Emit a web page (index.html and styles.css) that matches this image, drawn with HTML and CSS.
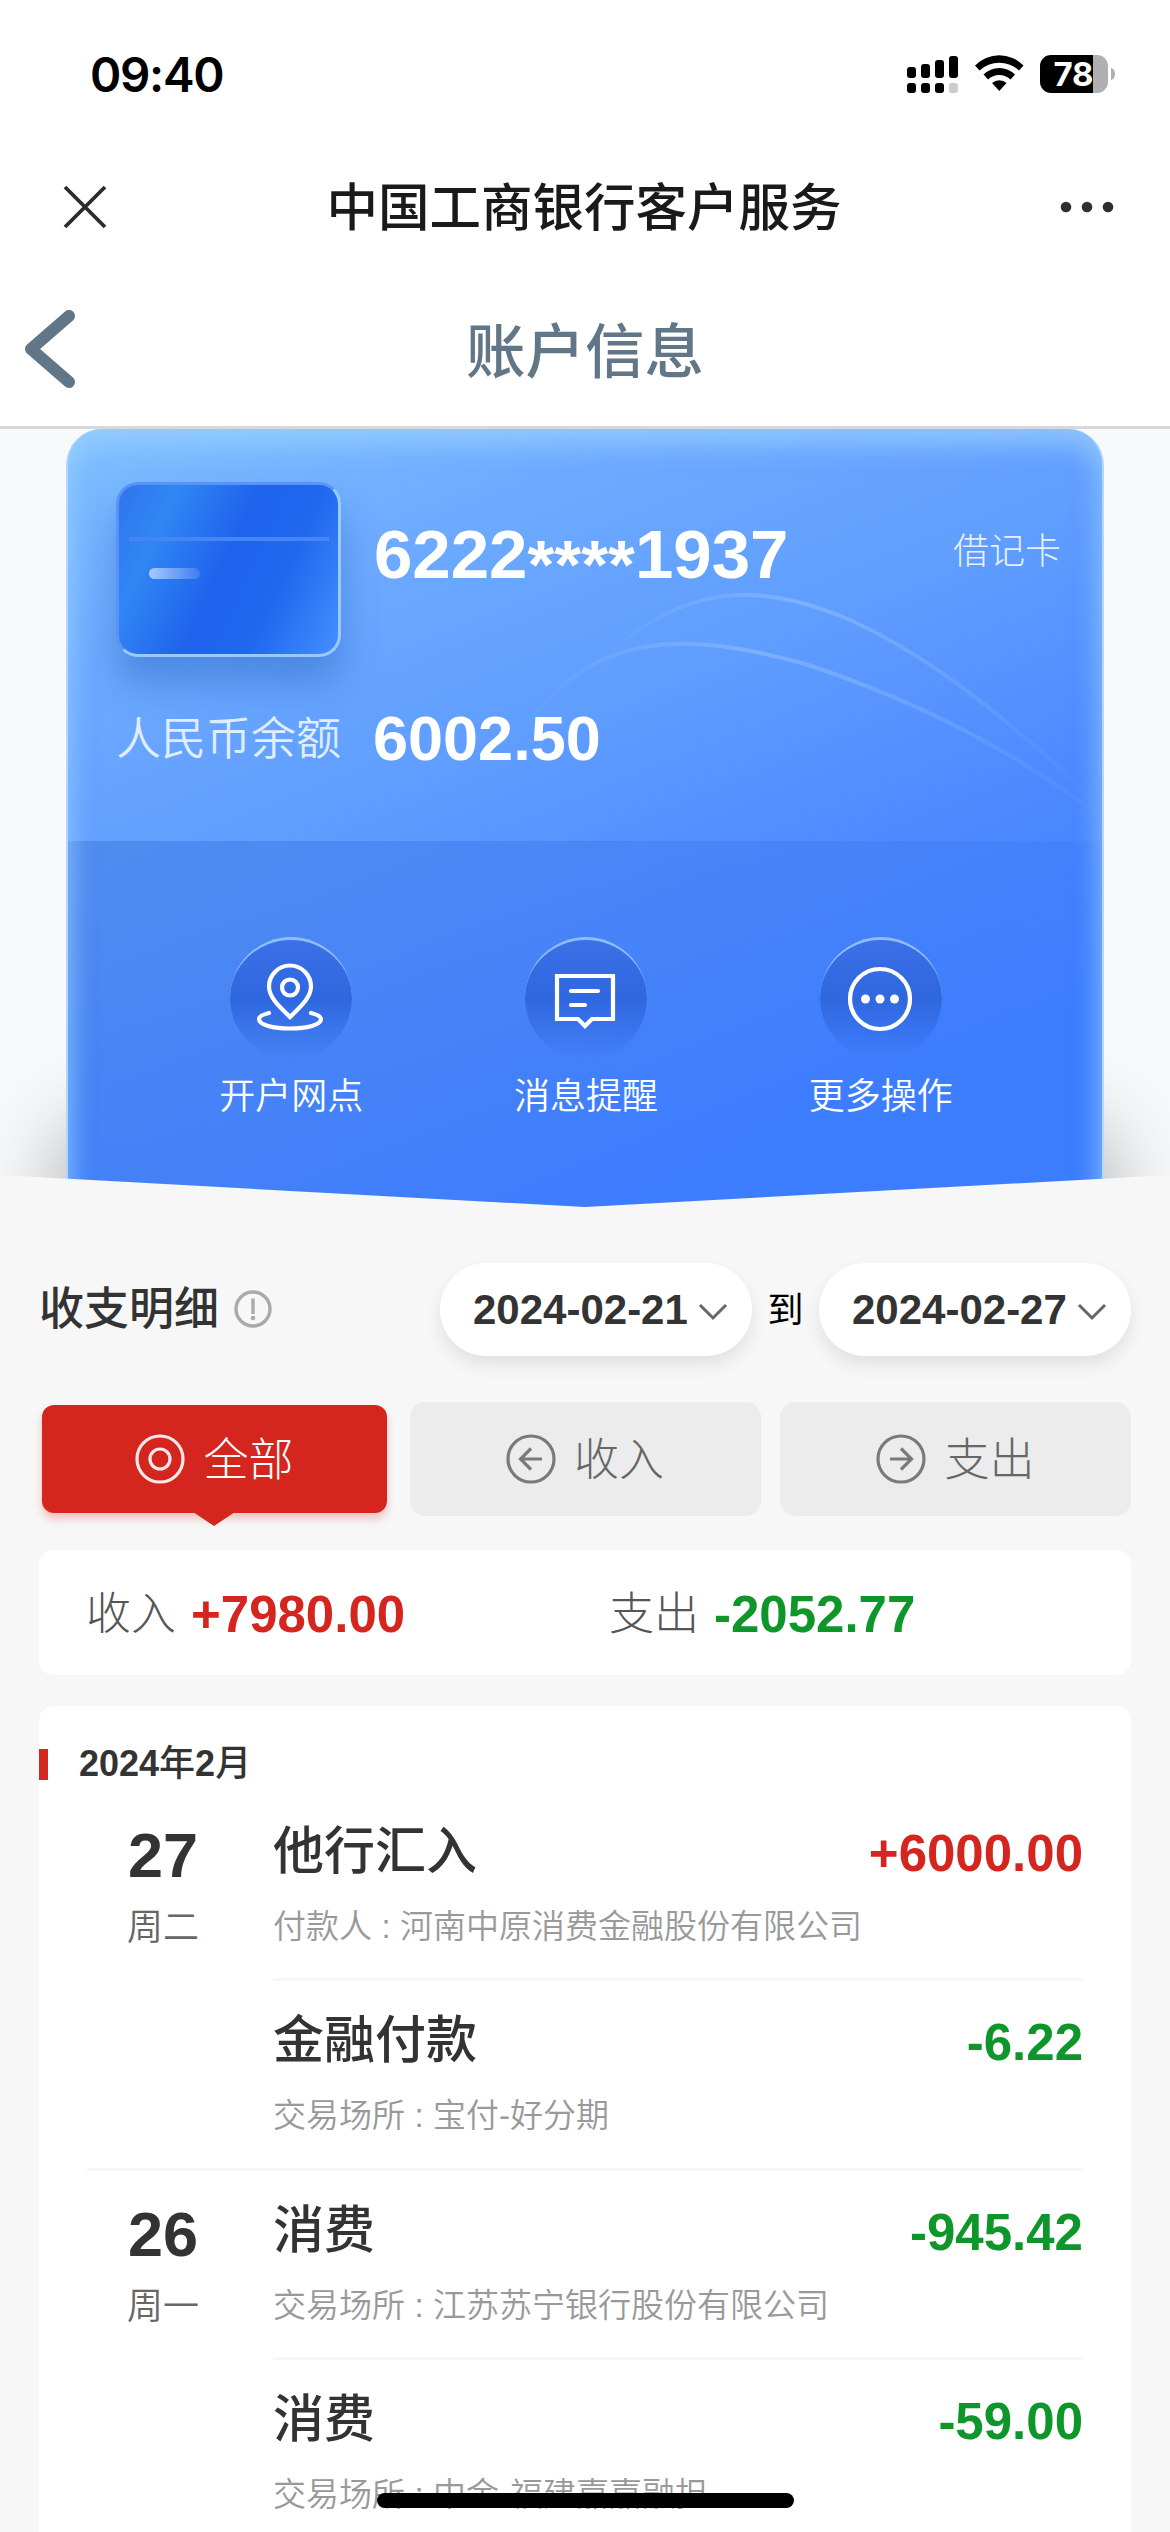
FILE: index.html
```html
<!DOCTYPE html>
<html lang="zh-CN">
<head>
    <meta charset="UTF-8">
    <title>账户信息</title>
    <link rel="stylesheet" href="styles.css">
</head>
<body>
    <div class="status-bar">
        <span class="time">09:40</span>
        <svg class="status-icons" width="212" height="42" viewBox="0 0 212 42">
            <g fill="#000">
                <rect x="0" y="14" width="9" height="11" rx="3"/>
                <rect x="14" y="11" width="9" height="14" rx="3"/>
                <rect x="28" y="7" width="9" height="18" rx="3"/>
                <rect x="42" y="3" width="9" height="22" rx="3"/>
                <rect x="0" y="30" width="9" height="10" rx="3"/>
                <rect x="14" y="30" width="9" height="10" rx="3"/>
                <rect x="28" y="30" width="9" height="10" rx="3"/>
                <rect x="42" y="30" width="9" height="10" rx="3" fill="#ccc"/>
                <path d="M68 12.5 A34 34 0 0 1 116.500 12.500 L112 17.500 A29 29 0 0 0 72.500 17.500 Z"/>
                <path d="M76.500 21.500 A22.500 22.500 0 0 1 108 21.500 L103.500 26.500 A16 16 0 0 0 81 26.500 Z"/>
                <path d="M85 30 A11 11 0 0 1 99.500 30 L92.300 38 Z"/>
            </g>
            <path d="M144 2 H186 V40 H144 A11 11 0 0 1 133 29 V13 A11 11 0 0 1 144 2 Z" fill="#000"/>
            <path d="M186 2 H190 A11 11 0 0 1 201 13 V29 A11 11 0 0 1 190 40 H186 Z" fill="#b0b0b0"/>
            <path d="M204 15 Q208 16 208 21 Q208 26 204 27 Z" fill="#b0b0b0"/>
            <text x="166.500" y="32.500" class="battery-text">78</text>
        </svg>
    </div>

    <div class="title-bar">
        <svg class="close" width="46" height="46" viewBox="0 0 46 46"><path d="M3 3 L43 43 M43 3 L3 43"/></svg>
        <h1>中国工商银行客户服务</h1>
        <svg class="more" width="54" height="12" viewBox="0 0 54 12"><circle cx="6" cy="6" r="5.300"/><circle cx="27" cy="6" r="5.300"/><circle cx="48" cy="6" r="5.300"/></svg>
    </div>

    <div class="page-header">
        <svg class="back" width="56" height="82" viewBox="0 0 56 82"><path d="M47 7 L9 40 L47 73"/></svg>
        <h2>账户信息</h2>
    </div>

    <div class="card-area">
        <div class="card">
            <svg class="arcs" width="620" height="280" viewBox="0 0 620 280">
                <defs>
                    <linearGradient id="arc" x1="0" x2="1">
                        <stop offset="0" stop-color="#9cc4ff" stop-opacity="0"/>
                        <stop offset=".4" stop-color="#9cc4ff" stop-opacity=".5"/>
                        <stop offset="1" stop-color="#9cc4ff" stop-opacity="0"/>
                    </linearGradient>
                </defs>
                <path d="M90 76 C170 2 245 0 335 39 C425 80 500 146 575 214"/>
                <path d="M5 152 C75 49 170 49 290 83 C410 122 520 181 603 250"/>
            </svg>
            <div class="card-top">
                <div class="bank-card">
                    <div class="stripe"></div>
                    <div class="chip"></div>
                </div>
                <span class="card-number">6222<span class="mask">****</span>1937</span>
                <span class="card-type">借记卡</span>
            </div>
            <div class="balance">
                <span class="balance-label">人民币余额</span>
                <span class="balance-value">6002.50</span>
            </div>
            <div class="actions">
                <div class="action">
                    <div class="action-icon">
                        <svg width="80" height="80" viewBox="0 0 80 80">
                            <path d="M40 58 C31 49 19 39 19 27.500 A21 21 0 0 1 61 27.500 C61 39 49 49 40 58 Z"/>
                            <circle cx="40" cy="28.500" r="8"/>
                            <path d="M19 54 C11 56 9 58 9 60 C9 66 23 69.500 40 69.500 C57 69.500 71 66 71 60 C71 58 69 56 61 54"/>
                        </svg>
                    </div>
                    <span>开户网点</span>
                </div>
                <div class="action">
                    <div class="action-icon">
                        <svg width="80" height="80" viewBox="0 0 80 80">
                            <path d="M12 17 H68 V60 H47 L40 67 L33 60 H12 Z"/>
                            <path d="M26 32 H53 M26 46 H40"/>
                        </svg>
                    </div>
                    <span>消息提醒</span>
                </div>
                <div class="action">
                    <div class="action-icon">
                        <svg width="80" height="80" viewBox="0 0 80 80">
                            <circle cx="40" cy="40" r="30"/>
                            <g class="dots"><circle cx="25.500" cy="40" r="4.500"/><circle cx="40" cy="40" r="4.500"/><circle cx="54.500" cy="40" r="4.500"/></g>
                        </svg>
                    </div>
                    <span>更多操作</span>
                </div>
            </div>
        </div>
        <div class="card-shadow"></div>
        <div class="card-edge"></div>
    </div>

    <div class="filter">
        <h3>收支明细</h3>
        <svg class="info" width="40" height="40" viewBox="0 0 40 40"><circle cx="20" cy="20" r="17"/><path d="M20 9.500 V25"/><circle class="dot" cx="20" cy="29" r="2.300"/></svg>
        <div class="date">2024-02-21<svg width="30" height="18" viewBox="0 0 30 18"><path d="M2 2 L15 15 L28 2"/></svg></div>
        <span class="to">到</span>
        <div class="date">2024-02-27<svg width="30" height="18" viewBox="0 0 30 18"><path d="M2 2 L15 15 L28 2"/></svg></div>
    </div>

    <div class="tabs">
        <div class="tab active">
            <svg width="50" height="50" viewBox="0 0 50 50"><circle cx="25" cy="25" r="23"/><circle cx="25" cy="25" r="10"/></svg>
            <span>全部</span>
        </div>
        <div class="tab">
            <svg width="50" height="50" viewBox="0 0 50 50"><circle cx="25" cy="25" r="23"/><path d="M36 25 H15 M25 14.500 L14.500 25 L25 35.500"/></svg>
            <span>收入</span>
        </div>
        <div class="tab">
            <svg width="50" height="50" viewBox="0 0 50 50"><circle cx="25" cy="25" r="23"/><path d="M14 25 H35 M25 14.500 L35.500 25 L25 35.500"/></svg>
            <span>支出</span>
        </div>
    </div>

    <div class="summary">
        <div><span class="label">收入</span><span class="amount in">+7980.00</span></div>
        <div><span class="label">支出</span><span class="amount out">-2052.77</span></div>
    </div>

    <div class="list">
        <div class="month"><b>2024</b>年<b>2</b>月</div>
        <div class="day">
            <div class="day-date"><b>27</b><span>周二</span></div>
            <div class="records">
                <div class="record">
                    <div class="row"><span class="name">他行汇入</span><span class="amount in">+6000.00</span></div>
                    <p>付款人<i>:</i>河南中原消费金融股份有限公司</p>
                </div>
                <div class="record">
                    <div class="row"><span class="name">金融付款</span><span class="amount out">-6.22</span></div>
                    <p>交易场所<i>:</i>宝付-好分期</p>
                </div>
            </div>
        </div>
        <div class="day">
            <div class="day-date"><b>26</b><span>周一</span></div>
            <div class="records">
                <div class="record">
                    <div class="row"><span class="name">消费</span><span class="amount out">-945.42</span></div>
                    <p>交易场所<i>:</i>江苏苏宁银行股份有限公司</p>
                </div>
                <div class="record">
                    <div class="row"><span class="name">消费</span><span class="amount out">-59.00</span></div>
                    <p>交易场所<i>:</i>中金-福建嘉嘉融担</p>
                </div>
            </div>
        </div>
    </div>

    <div class="home-bar"></div>
</body>
</html>
```
FILE: styles.css
```css
* {
    box-sizing: border-box;
    margin: 0;
    padding: 0;
}

body {
    width: 1170px;
    height: 2532px;
    overflow: hidden;
    position: relative;
    background: #f7f7f7;
    color: #333;
    font-family: "Liberation Sans", "Noto Sans CJK SC", sans-serif;
}

svg {
    display: block;
    fill: none;
    flex-shrink: 0;
}

/* status bar */
.status-bar {
    height: 141px;
    padding: 0 51px 0 90px;
    background: #fff;
    display: flex;
    justify-content: space-between;
    align-items: center;
}

.time {
    font-family: Inter, sans-serif;
    font-size: 47.500px;
    font-weight: 600;
    letter-spacing: -1.300px;
    color: #000;
    padding-top: 8px;
}

.status-icons {
    margin-top: 6px;
}

.battery-text {
    fill: #fff;
    font-family: Inter, sans-serif;
    font-size: 33px;
    font-weight: 700;
    text-anchor: middle;
}

/* title */
.title-bar {
    height: 132px;
    padding: 0 56px 0 62px;
    background: #fff;
    display: flex;
    justify-content: space-between;
    align-items: center;
}

.title-bar h1 {
    padding-bottom: 8px;
    font-size: 51.500px;
    font-weight: 500;
    color: #1a1a1a;
}

.close {
    stroke: #2b2b2b;
    stroke-width: 3.800;
}

.more {
    fill: #2f2f2f;
}

.page-header {
    height: 156px;
    padding: 0 22px;
    background: #fff;
    border-bottom: 3px solid #d6d8da;
    display: grid;
    grid-template-columns: 56px 1fr 56px;
    align-items: center;
    text-align: center;
}

.page-header h2 {
    padding-bottom: 6px;
    font-size: 59.500px;
    font-weight: 500;
    color: #617686;
}

.back {
    stroke: #617686;
    stroke-width: 12;
    stroke-linecap: round;
    stroke-linejoin: round;
}

/* account card */
.card-area {
    height: 778px;
    padding: 0 66px;
    position: relative;
    overflow: hidden;
    background: #f7f9fb;
    z-index: 0;
}

.card {
    height: 778px;
    position: relative;
    border: 2px solid #b4d6ff;
    border-top: none;
    border-bottom: none;
    border-radius: 36px 36px 0 0;
    background: linear-gradient(158deg, #7dc0ff 0%, #6ca9ff 22%, #609eff 40%, #4f8cff 60%, #3d7dff 82%);
}

.card::after {
    content: "";
    position: absolute;
    inset: 0 0 -60px;
    border-radius: 34px 34px 0 0;
    box-shadow: inset 0 16px 26px rgba(160, 212, 255, 0.6), inset 0 0 30px rgba(140, 200, 255, 0.45);
    pointer-events: none;
}

.card-shadow {
    position: absolute;
    left: 80px;
    right: 80px;
    bottom: -50px;
    height: 110px;
    z-index: -1;
    box-shadow: 0 0 90px 12px rgba(0, 0, 0, 0.38);
}

.arcs {
    position: absolute;
    left: 447px;
    top: 152px;
    overflow: visible;
    stroke: url(#arc);
    stroke-width: 4;
}

.card-top {
    height: 228px;
    padding: 53px 41px 0 48px;
    display: flex;
}

.bank-card {
    width: 225px;
    height: 175px;
    flex-shrink: 0;
    border: 3px solid;
    border-color: #5b92f8 #9cc8ff #9cc8ff #5b92f8;
    border-radius: 22px;
    padding: 52px 9px 0 10px;
    background: linear-gradient(115deg, #2f74ef 0%, #3186f4 20%, #1f62ec 48%, #2068ee 70%, #468fff 100%);
    box-shadow: 0 26px 36px rgba(40, 100, 190, 0.45);
}

.stripe {
    height: 4px;
    background: #4685f4;
}

.chip {
    width: 51px;
    height: 11px;
    margin: 27px 0 0 20px;
    border-radius: 6px;
    background: linear-gradient(90deg, #a5cbff, #3e7cf0);
}

.card-number {
    margin: 28px 0 0 33px;
    font-size: 69px;
    line-height: 90px;
    font-weight: 700;
    color: #fff;
}

.mask {
    line-height: 1;
    vertical-align: -10px;
}

.card-type {
    margin: 42px 0 0 auto;
    font-size: 36px;
    line-height: 56px;
    font-weight: 300;
    color: #e6f0ff;
}

.balance {
    height: 184px;
    padding-left: 48px;
    padding-top: 41px;
    display: flex;
}

.balance-label {
    width: 257px;
    padding-top: 2px;
    font-size: 45px;
    line-height: 80px;
    font-weight: 350;
    color: #dfedff;
}

.balance-value {
    font-size: 63px;
    line-height: 80px;
    font-weight: 700;
    color: #fff;
}

.actions {
    height: 366px;
    padding: 96px 74px 0 76px;
    display: flex;
    justify-content: space-between;
    background: linear-gradient(150deg, rgba(50, 110, 215, 0.42), rgba(60, 120, 240, 0.4) 45%, rgba(60, 125, 255, 0.4) 75%);
}

.action {
    width: 295px;
    display: flex;
    flex-direction: column;
    align-items: center;
}

.action-icon {
    width: 122px;
    height: 122px;
    padding: 19px 20px 19px;
    border-radius: 50%;
    border-top: 3px solid #8dbcff;
    background: linear-gradient(#3b70e6, #2f67df 50%, rgba(60, 120, 245, 0));
}

.action-icon svg {
    width: 80px;
    height: 80px;
    stroke: #fff;
    stroke-width: 4.200;
    stroke-linecap: round;
}

.action-icon .dots {
    fill: #fff;
    stroke: none;
}

.action span {
    margin-top: 11px;
    font-size: 36px;
    line-height: 54px;
    font-weight: 350;
    color: #fff;
}

.card-edge {
    position: absolute;
    left: 0;
    bottom: 0;
    width: 1170px;
    height: 32px;
    background: #f7f7f7;
    clip-path: polygon(0 0, 50% 100%, 100% 0, 100% 100%, 0 100%);
}

/* date filter */
.filter {
    height: 195px;
    padding: 55px 39px 0;
    display: grid;
    grid-template-columns: 194px 207px 312px 67px 312px;
    align-items: center;
    align-content: start;
}

.filter h3 {
    padding-top: 1px;
    font-size: 45px;
    line-height: 93px;
    font-weight: 500;
}

.info {
    stroke: #aaa;
    stroke-width: 3.400;
}

.info .dot {
    fill: #aaa;
    stroke: none;
}

.date {
    height: 93px;
    padding: 1px 24px 0 33px;
    border-radius: 47px;
    background: #fff;
    box-shadow: 0 9px 18px rgba(0, 0, 0, 0.09);
    display: flex;
    justify-content: space-between;
    align-items: center;
    font-size: 42px;
    font-weight: 700;
}

.date svg {
    margin-top: 4px;
    stroke: #666;
    stroke-width: 3;
}

.to {
    padding-bottom: 5px;
    font-size: 36px;
    color: #000;
    text-align: center;
}

/* tabs */
.tabs {
    padding: 0 39px;
    height: 148px;
    display: grid;
    grid-template-columns: 351px 351px 351px;
    justify-content: space-between;
}

.tab {
    height: 114px;
    border-radius: 15px;
    background: #ececec;
    display: flex;
    align-items: center;
    justify-content: center;
    gap: 18px;
    font-size: 45px;
    font-weight: 300;
    color: #666;
}

.tab span {
    padding-bottom: 5px;
}

.tab svg {
    stroke: #7a7a7a;
    stroke-width: 3.200;
}

.tab.active {
    height: 108px;
    margin: 3px;
    position: relative;
    border-radius: 12px;
    background: #d4261e;
    color: #fff;
    box-shadow: 0 6px 9px rgba(212, 38, 30, 0.25);
}

.tab.active svg {
    stroke: #ffe9e8;
}

.tab.active::after {
    content: "";
    position: absolute;
    left: 151px;
    top: 107px;
    border: 21px solid transparent;
    border-top: 14px solid #d4261e;
    border-bottom: none;
}

/* totals */
.summary {
    height: 125px;
    margin: 0 39px 31px;
    padding: 0 47px;
    border-radius: 15px;
    background: #fff;
    display: grid;
    grid-template-columns: 523px 1fr;
    align-items: center;
}

.summary div {
    display: flex;
    align-items: center;
}

.label {
    width: 105px;
    padding-bottom: 4px;
    font-size: 45px;
    font-weight: 300;
    color: #555;
}

.amount {
    padding-top: 3px;
    font-size: 51px;
    font-weight: 700;
}

.in {
    color: #d4261e;
}

.out {
    color: #0f962b;
}

/* records */
.list {
    height: 840px;
    margin: 0 39px;
    padding-top: 30px;
    border-radius: 15px 15px 0 0;
    background: #fff;
}

.month {
    height: 56px;
    padding-left: 40px;
    font-size: 36px;
    line-height: 56px;
    font-weight: 500;
    background: linear-gradient(#d4261e, #d4261e) 0 13px / 9px 31px no-repeat;
}

.day {
    margin: 0 48px;
    display: flex;
    border-bottom: 3px solid #f6f6f6;
}

.day-date {
    width: 186px;
    padding: 27px 34px 0 0;
    display: flex;
    flex-direction: column;
    align-items: center;
}

.day-date b {
    font-size: 63px;
    line-height: 72px;
}

.day-date span {
    margin-top: 10px;
    font-size: 36px;
    line-height: 54px;
    font-weight: 350;
    color: #666;
}

.records {
    flex: 1;
}

.record {
    height: 189px;
    padding-top: 25px;
    border-bottom: 3px solid #f6f6f6;
}

.record:last-child {
    height: 187px;
    border-bottom: none;
}

.row {
    height: 70px;
    display: flex;
    justify-content: space-between;
    align-items: center;
}

.name {
    padding-bottom: 10px;
    font-size: 51px;
    font-weight: 500;
}

.record p {
    margin-top: 15px;
    font-size: 33px;
    line-height: 50px;
    font-weight: 350;
    color: #999;
}

.record i {
    display: inline-block;
    width: 28px;
    text-align: center;
    font-style: normal;
}

.home-bar {
    position: absolute;
    left: 377px;
    bottom: 24px;
    width: 417px;
    height: 15px;
    border-radius: 8px;
    background: #000;
}
```
